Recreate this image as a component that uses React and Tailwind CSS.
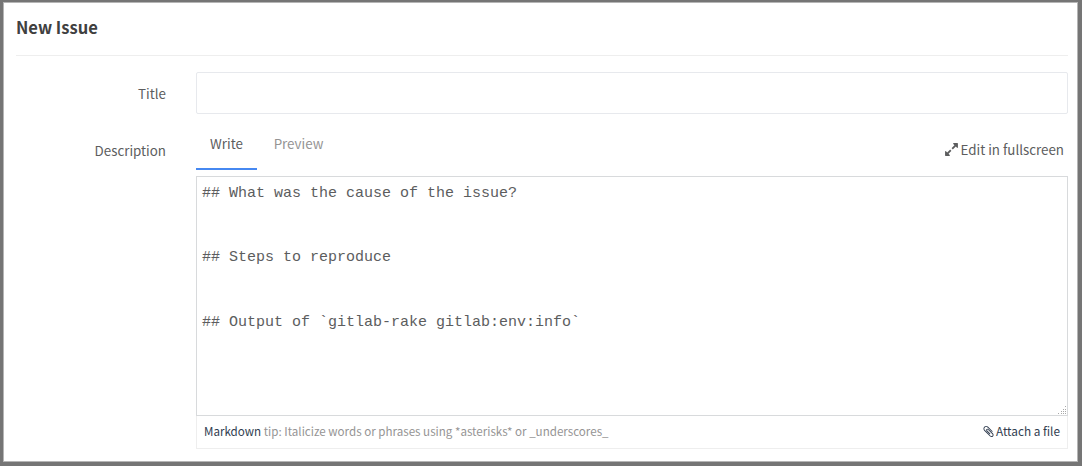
const TEMPLATE = [
  '## What was the cause of the issue?',
  '',
  '',
  '## Steps to reproduce',
  '',
  '',
  '## Output of `gitlab-rake gitlab:env:info`',
].join('\n');

function ExpandIcon({ className }) {
  return (
    <svg viewBox="0 0 1792 1792" fill="currentColor" className={className} aria-hidden="true">
      <path d="M883 1056q0 13-10 23l-332 332 144 144q19 19 19 45t-19 45-45 19h-448q-26 0-45-19t-19-45v-448q0-26 19-45t45-19 45 19l144 144 332-332q10-10 23-10t23 10l114 114q10 10 10 23zm781-864v448q0 26-19 45t-45 19-45-19l-144-144-332 332q-10 10-23 10t-23-10l-114-114q-10-10-10-23t10-23l332-332-144-144q-19-19-19-45t19-45 45-19h448q26 0 45 19t19 45z" />
    </svg>
  );
}

function PaperclipIcon({ className }) {
  return (
    <svg viewBox="0 0 1792 1792" fill="currentColor" className={className} aria-hidden="true">
      <path d="M1596 1385q0 117-79 196t-196 79q-135 0-235-100l-777-776q-113-115-113-271 0-159 110-270t269-111q158 0 273 113l605 606q10 10 10 22 0 16-30.5 46.5t-46.5 30.5q-13 0-23-10l-606-607q-79-77-181-77-106 0-179 75t-73 181q0 105 76 181l776 777q63 63 145 63 64 0 106-42t42-106q0-82-63-145l-581-581q-26-24-60-24-29 0-48 19t-19 48q0 32 25 59l410 410q10 10 10 22 0 16-31 47t-47 31q-12 0-22-10l-410-410q-63-61-63-149 0-82 57-139t139-57q88 0 149 63l581 581q100 98 100 235z" />
    </svg>
  );
}

function ResizeGrip({ className }) {
  const steps = [0, 3, 5, 7];
  return (
    <svg viewBox="0 0 8 8" className={className} aria-hidden="true" shapeRendering="crispEdges">
      {steps.flatMap((y, row) =>
        steps.slice(3 - row).map((x) => (
          <rect key={`${x}-${y}`} x={x} y={y} width="1" height="1" fill="#a8a8a8" />
        ))
      )}
    </svg>
  );
}

export default function App() {
  return (
    <div className="h-[466px] w-[1082px] overflow-hidden bg-[#757575] pt-0.5 pr-1 pb-1 pl-[3px] font-['Noto_Sans_CJK_SC',sans-serif] text-[13.35px] text-[#5c5d5e]">
      <div className="h-full border border-[#b5b5b5] bg-white pr-[9px] pl-3">
        <h1 className="h-[53px] border-b border-[#eeeeee] text-[16.5px] leading-[48px] font-bold text-[#404040]">New Issue</h1>

        <div className="mt-4 flex h-[42px]">
          <label htmlFor="title" className="w-[180px] pr-[30px] text-right leading-[43px]">Title</label>
          <input id="title" className="min-w-0 flex-1 rounded-[2px] border border-[#e7e9ed] px-2 outline-none" />
        </div>

        <div className="flex">
          <label htmlFor="description" className="w-[180px] pt-[27px] pr-[30px] text-right leading-5">Description</label>
          <div className="min-w-0 flex-1">
            <div className="flex h-[62px] items-start justify-between">
              <div className="flex leading-5">
                <button className="h-14 w-[61px] border-b-2 border-[#4688f1] pt-[5px] text-center">Write</button>
                <button className="h-14 w-[83px] pt-[3px] text-center text-[#959494]">Preview</button>
              </div>
              <button className="mt-[26px] flex items-center pr-1 leading-5">
                <ExpandIcon className="mr-0.5 mb-0.5 size-[15px]" />
                Edit in fullscreen
              </button>
            </div>
            <div className="relative h-60">
              <textarea
                id="description"
                defaultValue={TEMPLATE}
                spellCheck={false}
                className="block h-full w-full resize-none border border-[#d8dadc] px-[5px] py-1.5 font-['Liberation_Mono',monospace] text-[15px] leading-[21.43px] text-[#5c5d5e] outline-none"
              />
              <ResizeGrip className="absolute right-0.5 bottom-0.5 size-2" />
            </div>
            <div className="flex h-[33px] items-center justify-between border border-t-0 border-[#eeeeee] px-[7px] pb-0.5 text-[11.6px] leading-4 text-[#959494]">
              <p>
                <span className="text-[#313d50]">Markdown</span> tip: Italicize words or phrases using *asterisks* or _underscores_
              </p>
              <button className="flex items-center text-[11.8px] text-[#313d50]">
                <PaperclipIcon className="mr-px size-[13px]" />
                Attach a file
              </button>
            </div>
          </div>
        </div>
      </div>
    </div>
  );
}
